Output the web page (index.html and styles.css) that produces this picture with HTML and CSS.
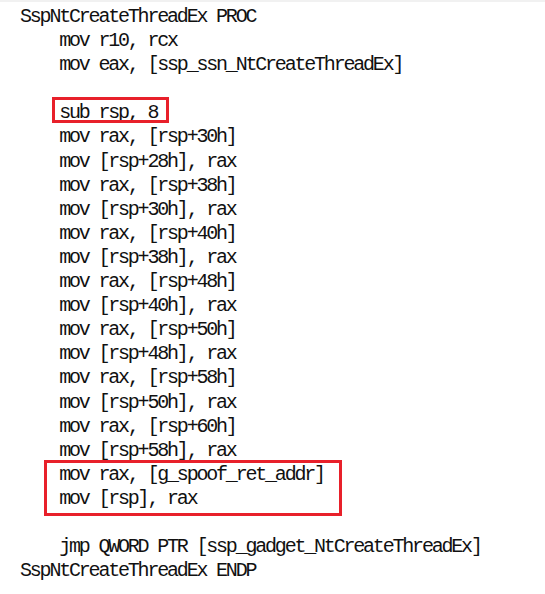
FILE: index.html
```html
<!DOCTYPE html>
<html>
<head>
<meta charset="utf-8">
<link rel="stylesheet" href="styles.css">
</head>
<body>
<div class="topbar"></div>
<div class="code">
<div class="ln">SspNtCreateThreadEx PROC</div>
<div class="ln">    mov r10, rcx</div>
<div class="ln">    mov eax, [ssp_ssn_NtCreateThreadEx]</div>
<div class="ln"> </div>
<div class="ln mark-line">    sub rsp, 8<span class="box box-sub"></span></div>
<div class="ln">    mov rax, [rsp+30h]</div>
<div class="ln">    mov [rsp+28h], rax</div>
<div class="ln">    mov rax, [rsp+38h]</div>
<div class="ln">    mov [rsp+30h], rax</div>
<div class="ln">    mov rax, [rsp+40h]</div>
<div class="ln">    mov [rsp+38h], rax</div>
<div class="ln">    mov rax, [rsp+48h]</div>
<div class="ln">    mov [rsp+40h], rax</div>
<div class="ln">    mov rax, [rsp+50h]</div>
<div class="ln">    mov [rsp+48h], rax</div>
<div class="ln">    mov rax, [rsp+58h]</div>
<div class="ln">    mov [rsp+50h], rax</div>
<div class="ln">    mov rax, [rsp+60h]</div>
<div class="ln">    mov [rsp+58h], rax</div>
<div class="group">
<div class="ln">    mov rax, [g_spoof_ret_addr]</div>
<div class="ln">    mov [rsp], rax</div>
<span class="box box-spoof"></span>
</div>
<div class="ln"> </div>
<div class="ln">    jmp QWORD PTR [ssp_gadget_NtCreateThreadEx]</div>
<div class="ln">SspNtCreateThreadEx ENDP</div>
</div>
</body>
</html>
```
FILE: styles.css
```css
html, body {
  margin: 0;
  padding: 0;
  background: #ffffff;
}
.topbar {
  height: 2px;
  background: #f1f1f1;
}
.code {
  padding: 3px 0 0 20px;
  font-family: "Liberation Mono", monospace;
  font-size: 20px;
  letter-spacing: -2.2px;
  color: #111;
}
.ln {
  white-space: pre;
  height: 24.1px;
  line-height: 24.1px;
}
.mark-line, .group {
  position: relative;
}
.box {
  position: absolute;
  border: 3px solid #e8202a;
  box-sizing: border-box;
}
.box-sub {
  left: 32px;
  top: -4.4px;
  width: 117px;
  height: 26px;
}
.box-spoof {
  left: 24px;
  top: -3px;
  width: 298px;
  height: 56px;
}
```
